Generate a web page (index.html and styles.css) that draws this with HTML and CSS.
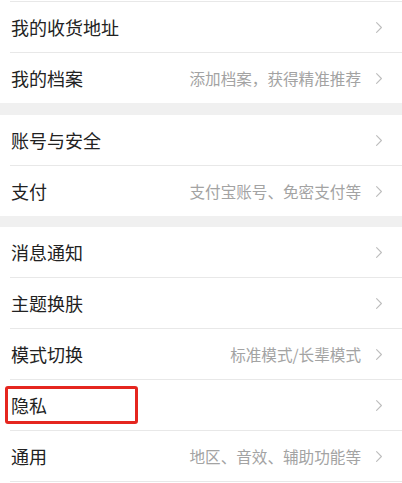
FILE: index.html
```html
<!DOCTYPE html>
<html lang="zh-CN">
<head>
<meta charset="utf-8">
<title>设置</title>
<link rel="stylesheet" href="styles.css">
</head>
<body>
<div class="page">
  <div class="stub"></div>
  <div class="divider"></div>

  <div class="row"><span class="label">我的收货地址</span><span class="value"></span><svg class="chev" viewBox="0 0 6 11" width="6" height="11"><polyline points="0.6,0.6 5.4,5.5 0.6,10.4"/></svg></div>
  <div class="divider"></div>
  <div class="row"><span class="label">我的档案</span><span class="value">添加档案，获得精准推荐</span><svg class="chev" viewBox="0 0 6 11" width="6" height="11"><polyline points="0.6,0.6 5.4,5.5 0.6,10.4"/></svg></div>

  <div class="gap"></div>

  <div class="row"><span class="label">账号与安全</span><span class="value"></span><svg class="chev" viewBox="0 0 6 11" width="6" height="11"><polyline points="0.6,0.6 5.4,5.5 0.6,10.4"/></svg></div>
  <div class="divider"></div>
  <div class="row"><span class="label">支付</span><span class="value">支付宝账号、免密支付等</span><svg class="chev" viewBox="0 0 6 11" width="6" height="11"><polyline points="0.6,0.6 5.4,5.5 0.6,10.4"/></svg></div>

  <div class="gap gap-sm"></div>

  <div class="row"><span class="label">消息通知</span><span class="value"></span><svg class="chev" viewBox="0 0 6 11" width="6" height="11"><polyline points="0.6,0.6 5.4,5.5 0.6,10.4"/></svg></div>
  <div class="divider"></div>
  <div class="row"><span class="label">主题换肤</span><span class="value"></span><svg class="chev" viewBox="0 0 6 11" width="6" height="11"><polyline points="0.6,0.6 5.4,5.5 0.6,10.4"/></svg></div>
  <div class="divider"></div>
  <div class="row"><span class="label">模式切换</span><span class="value">标准模式/长辈模式</span><svg class="chev" viewBox="0 0 6 11" width="6" height="11"><polyline points="0.6,0.6 5.4,5.5 0.6,10.4"/></svg></div>
  <div class="divider"></div>
  <div class="row row-marked"><span class="label">隐私</span><span class="value"></span><svg class="chev" viewBox="0 0 6 11" width="6" height="11"><polyline points="0.6,0.6 5.4,5.5 0.6,10.4"/></svg><div class="highlight"></div></div>
  <div class="divider"></div>
  <div class="row"><span class="label">通用</span><span class="value">地区、音效、辅助功能等</span><svg class="chev" viewBox="0 0 6 11" width="6" height="11"><polyline points="0.6,0.6 5.4,5.5 0.6,10.4"/></svg></div>
  <div class="divider"></div>
  <div class="stub"></div>
</div>
</body>
</html>
```

FILE: styles.css
```css
html, body {
  margin: 0;
  padding: 0;
  background: #ffffff;
}

.page {
  width: 402px;
  font-family: "Noto Sans CJK SC", "Noto Sans", sans-serif;
  background: #ffffff;
}

.stub {
  height: 1px;
  background: #ffffff;
}

.divider {
  height: 1px;
  margin-left: 10px;
  background: #e8e8e8;
}

.gap {
  height: 12px;
  background: #f0f0f0;
}

.gap-sm {
  height: 11px;
}

.row {
  position: relative;
  display: flex;
  align-items: center;
  height: 50px;
  padding: 0 20px 0 11px;
  box-sizing: border-box;
}

.label {
  font-size: 18px;
  line-height: 24px;
  color: #222222;
  white-space: nowrap;
}

.value {
  flex: 1;
  text-align: right;
  font-size: 15.6px;
  line-height: 22px;
  color: #a3a3a3;
  white-space: nowrap;
  margin-right: 15px;
}

.chev {
  flex: none;
  display: block;
}

.chev polyline {
  fill: none;
  stroke: #bdbdbd;
  stroke-width: 1.1;
  stroke-linecap: round;
  stroke-linejoin: round;
}

.highlight {
  position: absolute;
  left: 5px;
  top: 6px;
  width: 133px;
  height: 38px;
  box-sizing: border-box;
  border: 3px solid #e5261f;
  border-radius: 3px;
}
```
